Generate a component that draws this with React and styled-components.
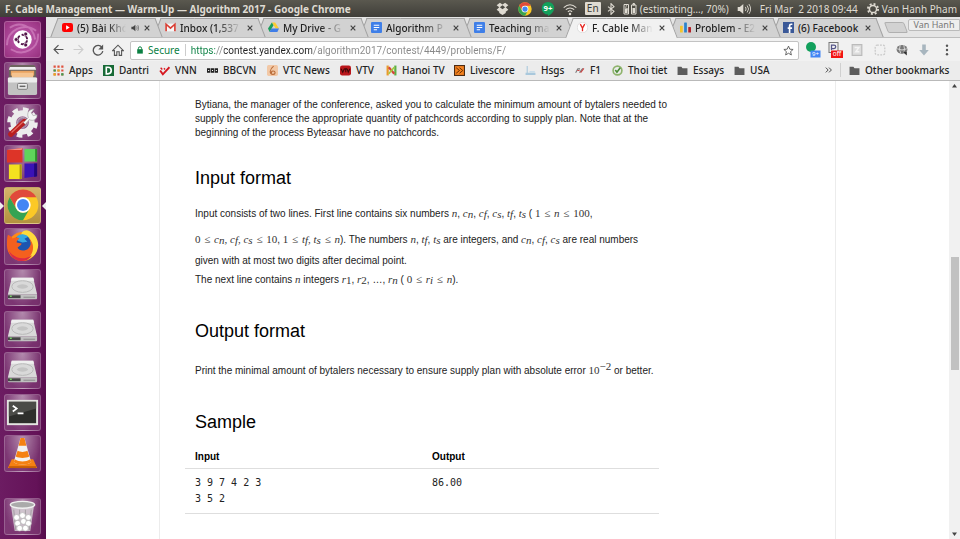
import React from 'react';
import styled, { createGlobalStyle, css } from 'styled-components';

const GlobalStyle = createGlobalStyle`
  *, *::before, *::after { box-sizing: border-box; }
  html, body { margin: 0; padding: 0; background: #fff; }
  body { font-family: "Noto Sans", "Open Sans", sans-serif; font-size: 11px; color: #222; }
  button, input { font: inherit; color: inherit; padding: 0; margin: 0; border: 0; background: none; }
  svg { display: block; flex: none; }
  a { color: inherit; text-decoration: none; }
`;

/* ---------- desktop ---------- */

const Desktop = styled.div`
  min-height: 100vh;
  display: flex;
  flex-direction: column;
`;

const TopPanel = styled.header`
  flex: none;
  height: 17px;
  display: flex;
  align-items: center;
  padding: 0 3px 0 5px;
  background: linear-gradient(#5a584f, #3f3e39);
  color: #dfdbd2;
  font-size: 11px;
  white-space: nowrap;
`;

const WindowTitle = styled.h1`
  flex: 1;
  margin: 0;
  font-family: "Noto Sans", sans-serif;
  font-size: 10px;
  font-weight: 700;
  line-height: 16px;
`;

const Indicators = styled.div`
  display: flex;
  align-items: center;
  line-height: 16px;
`;

const Indicator = styled.button`
  display: flex;
  align-items: center;
  justify-content: ${(p) => (p.$w ? 'center' : 'flex-start')};
  gap: 3px;
  width: ${(p) => (p.$w ? `${p.$w}px` : 'auto')};
  margin-left: ${(p) => p.$gap || 0}px;
  height: 16px;
  font-size: 10px;
  white-space: pre;
`;

const Lang = styled.span`
  padding: 0 2px;
  border-radius: 1px;
  background: #dfdbd2;
  color: #3c3b37;
  line-height: 13px;
`;

const Body = styled.div`
  flex: 1;
  display: flex;
`;

/* ---------- launcher ---------- */

const Launcher = styled.nav`
  flex: none;
  width: 46px;
  padding: 4px 5px 4px 4px;
  display: flex;
  flex-direction: column;
  background: linear-gradient(90deg, #6c1c62, #641258 80%, #560c4b);
`;

const AppList = styled.div`
  flex: 1;
  display: flex;
  flex-direction: column;
  justify-content: space-between;
  margin-bottom: 26px;
`;

const Tile = styled.button`
  position: relative;
  width: 37px;
  height: 37px;
  display: flex;
  align-items: center;
  justify-content: center;
  border-radius: 3px;
  border: 1px solid rgba(255, 255, 255, 0.2);
  background: ${(p) =>
    p.$tone || 'radial-gradient(ellipse at 50% 0, rgba(255,255,255,.5), rgba(255,255,255,.13) 75%)'};
  ${(p) =>
    p.$running &&
    css`
      &::before,
      &::after {
        content: '';
        position: absolute;
        top: 14px;
        border: 4px solid transparent;
      }
      &::before { left: -5px; border-left-color: #eee; border-right-width: 0; }
      &::after { right: -6px; border-right-color: #eee; border-left-width: 0; }
    `}
`;

/* ---------- browser ---------- */

const Browser = styled.div`
  flex: 1;
  min-width: 0;
  display: flex;
  flex-direction: column;
`;

const TabStrip = styled.div`
  flex: none;
  height: 21px;
  display: flex;
  align-items: flex-end;
  padding: 1px 0 0 4px;
  background: #e5e5e5;
  border-bottom: 1px solid #bdbdbd;
`;

const Tab = styled.div`
  position: relative;
  z-index: ${(p) => p.$z};
  flex: 0 1 113px;
  min-width: 0;
  height: 20px;
  margin-right: -10px;
  margin-bottom: -1px;
  padding: 0 12px 1px 12px;
  display: flex;
  align-items: center;
  gap: 4px;
  &::before,
  &::after {
    content: '';
    position: absolute;
    z-index: -1;
    top: 0;
    bottom: ${(p) => (p.$active ? 0 : 1)}px;
    background: ${(p) => (p.$active ? '#f1f1f1' : '#d2d2d2')};
    border: 0 solid #a0a0a0;
    border-top-width: 1px;
  }
  &::before { left: 4px; right: 40%; transform: skewX(-21deg); border-left-width: 1px; }
  &::after { right: 4px; left: 40%; transform: skewX(21deg); border-right-width: 1px; }
`;

const TabTitle = styled.button`
  flex: 1;
  min-width: 0;
  height: 18px;
  overflow: hidden;
  text-align: left;
  white-space: nowrap;
  font-size: 10px;
  font-weight: 500;
  line-height: 18px;
  mask-image: ${(p) => (p.$full ? 'none' : 'linear-gradient(90deg, #000 60%, transparent 98%)')};
`;

const IconButton = styled.button`
  flex: none;
  width: ${(p) => p.$w || 20}px;
  height: ${(p) => p.$h || 18}px;
  display: flex;
  align-items: center;
  justify-content: center;
`;

const NewTab = styled.button`
  flex: none;
  width: 20px;
  height: 11px;
  margin: 0 0 4px 12px;
  border: 1px solid #b0b0b0;
  border-radius: 2px;
  background: #d2d2d2;
  transform: skewX(21deg);
`;

const Profile = styled.button`
  margin: 0 0 6px auto;
  width: 52px;
  height: 12px;
  border: 1px solid #bbb;
  border-radius: 2px 0 0 2px;
  background: #eee;
  color: #777;
  font-size: 9px;
  line-height: 10px;
`;

const Toolbar = styled.div`
  flex: none;
  height: 23px;
  display: flex;
  align-items: center;
  padding: 0 2px;
  background: #f1f1f1;
`;

const Omnibox = styled.label`
  flex: 1;
  min-width: 0;
  height: 19px;
  margin: 1px 2px 0 2px;
  padding-left: 5px;
  display: flex;
  align-items: center;
  border: 1px solid #c3c3c3;
  border-radius: 2px;
  background: #fff;
  font-size: 10px;
`;

const Secure = styled.span`
  margin-left: 4px;
  padding-right: 5px;
  border-right: 1px solid #ccc;
  color: #0b8043;
  line-height: 12px;
`;

const Address = styled.input`
  flex: 1;
  min-width: 0;
  margin-left: 5px;
  outline: 0;
  color: transparent;
  font-family: Roboto, "Noto Sans", sans-serif;
  font-size: 10px;
  background: linear-gradient(90deg, #0b8043 0 25px, #888 25px 33px, #222 33px 121px, #888 121px);
  background-clip: text;
  -webkit-background-clip: text;
`;

const Bookmarks = styled.nav`
  flex: none;
  height: 20px;
  display: flex;
  align-items: center;
  padding: 0 0 1px 7px;
  background: #ececec;
  border-bottom: 1px solid #b9b9b9;
`;

const Bookmark = styled.a`
  flex: none;
  width: ${(p) => p.$w}px;
  display: flex;
  align-items: center;
  gap: 5px;
  white-space: nowrap;
  font-size: 10px;
  font-weight: 500;
  line-height: 18px;
`;

const OtherBookmarks = styled.div`
  margin-left: auto;
  display: flex;
  align-items: center;
`;

const Divider = styled.span`
  width: 1px;
  height: 14px;
  margin: 0 8px 0 2px;
  background: #d0d0d0;
`;

/* ---------- page ---------- */

const Viewport = styled.div`
  flex: 1;
  display: flex;
  background: #fff;
`;

const PageArea = styled.main`
  flex: 1;
  min-width: 0;
  display: flex;
  justify-content: center;
`;

const Problem = styled.article`
  width: 100%;
  max-width: 677px;
  padding: 17px 176px 0 25px;
  border: solid #ececec;
  border-width: 0 1px;
  font-family: "Liberation Sans", Arial, sans-serif;
  font-size: 10px;
  color: #222;
`;

const Text = styled.p`
  margin: 0;
  padding-left: 10px;
  white-space: nowrap;
  line-height: ${(p) => p.$lh || 14}px;
`;

const Line = styled.span`
  display: block;
  height: ${(p) => (p.$tall ? 26 : 18)}px;
  line-height: ${(p) => (p.$tall ? 26 : 18)}px;
`;

const Heading = styled.h2`
  margin: ${(p) => p.$top}px 0 ${(p) => p.$bottom}px;
  padding-left: 10px;
  font-size: 18px;
  font-weight: 400;
  line-height: 22px;
  color: #000;
`;

const Math = styled.span`
  font-family: "Liberation Serif", "Times New Roman", serif;
  font-size: 11px;
  font-style: ${(p) => (p.$it ? 'italic' : 'normal')};
  color: #333;
  sub, sup { font-size: 11px; line-height: 0; }
  sub { vertical-align: -1px; }
  sup { vertical-align: 4px; }
`;

const Rel = styled.span`
  margin: 0 1px;
`;

const Samples = styled.table`
  width: 100%;
  border-collapse: collapse;
  table-layout: fixed;
  th, td { width: 50%; text-align: left; vertical-align: top; border-bottom: 1px solid #dedede; }
  th { padding: 0 10px 3px; line-height: 16px; color: #000; }
  td {
    padding: 6px 10px;
    font-family: "DejaVu Sans Mono", monospace;
    line-height: 16px;
    white-space: pre;
  }
`;

const Scrollbar = styled.div`
  flex: none;
  width: 11px;
  display: flex;
  flex-direction: column;
  align-items: center;
  padding: 3px 0;
  background: #f1f1f1;
`;

const Track = styled.div`
  flex: ${(p) => p.$grow} 1 0;
`;

const Thumb = styled.div`
  flex: 114 1 0;
  width: 8px;
  background: #c1c1c1;
`;

/* ---------- icons ---------- */

const Svg = ({ s = 10, w, h, vb = '0 0 20 20', children, ...rest }) => (
  <svg width={w || s} height={h || s} viewBox={vb} fill="none" aria-hidden="true" {...rest}>
    {children}
  </svg>
);

const Chrome = ({ s }) => (
  <Svg s={s} vb="0 0 48 48">
    <circle cx="24" cy="24" r="23" fill="#fbc926" />
    <path d="M4 12.5A23 23 0 0 1 44 12.5H24A11.5 11.5 0 0 0 14 29.8z" fill="#e04a3b" />
    <path d="M4 12.5A23 23 0 0 0 24 47L34 29.8A11.5 11.5 0 0 1 14 29.8z" fill="#35a353" />
    <circle cx="24" cy="24" r="11.5" fill="#fff" />
    <circle cx="24" cy="24" r="9" fill="#4285f4" />
  </Svg>
);

const Ubuntu = () => (
  <Svg s={35} vb="0 0 36 36">
    <path d="M2 24C2 8 20 0 32 9M34 12c1 16-15 24-28 16M5 6C14-1 29 3 31 18" stroke="#e6a3d7" strokeOpacity=".45" strokeWidth="2" />
    <circle cx="18" cy="18" r="9.5" fill="#fff" />
    <circle cx="18" cy="18" r="4.8" stroke="#54164a" strokeWidth="2" strokeDasharray="8 2.05" strokeDashoffset="-1" />
    <g fill="#54164a" stroke="#fff" strokeWidth=".7">
      <circle cx="11.5" cy="18" r="2" /><circle cx="21.3" cy="12.4" r="2" /><circle cx="21.3" cy="23.6" r="2" />
    </g>
  </Svg>
);

const Files = () => (
  <Svg s={35} vb="0 0 36 36">
    <path d="M4 5l2-3h24l2 3v11H4z" fill="#6d655f" />
    <path d="M5 4h26l1 3H4z" fill="#eee" />
    <path d="M6 8h24v5H6z" fill="#e9a361" /><path d="M7 10h22v6H7z" fill="#f5c38f" />
    <rect x="3" y="15" width="30" height="18" rx="2" fill="#c2c2c2" />
    <rect x="3" y="15" width="30" height="5" rx="1" fill="#ececec" />
    <rect x="13" y="21" width="10" height="6" rx="1" fill="#eee" stroke="#777" />
    <path d="M15 24h6" stroke="#666" strokeWidth="1.6" />
  </Svg>
);

const Settings = () => (
  <Svg s={35} vb="0 0 36 36">
    <circle cx="18" cy="18" r="13.500" stroke="#eee" strokeWidth="4.500" strokeDasharray="5.600 5" />
    <circle cx="18" cy="18" r="9.500" stroke="#ececec" strokeWidth="6" />
    <circle cx="18" cy="18" r="5" stroke="#bbb" strokeWidth="1" />
    <path d="M6 30L20 17" stroke="#b91f1f" strokeWidth="5.5" strokeLinecap="round" />
    <path d="M7 28L19 17" stroke="#e46b60" strokeWidth="1.2" strokeLinecap="round" />
    <path d="M19 18l5-5c-2-5 1-9 6-9l-3 4 2 3 4-1c0 5-4 7-8 5l-4 5z" fill="#f4f4f4" stroke="#999" strokeWidth=".6" />
  </Svg>
);

const Blocks = () => (
  <Svg s={35} vb="0 0 36 36">
    <path d="M2 4l16-2v15H2z" fill="#dd3428" /><path d="M2 4l16-2-1 2H2z" fill="#f59084" />
    <path d="M20 3h13v13H20z" fill="#5fd45b" /><path d="M31 3h2v13h-2z" fill="#2c8c2a" />
    <path d="M4 19h13v15H4z" fill="#f3e11f" /><path d="M15 19h2v15h-2z" fill="#a8960a" />
    <path d="M20 18h13v13l-13 2z" fill="#3a12b6" /><path d="M30 18h3v13l-3 1z" fill="#21077a" />
  </Svg>
);

const Firefox = () => (
  <Svg s={35} vb="0 0 36 36">
    <circle cx="18" cy="18" r="15" fill="#ff8a16" />
    <path d="M17 4c3-3 5-3 8-2 8 4 11 13 8 20-2 6-7 9-12 10 6-6 5-18-4-22z" fill="#ffda3c" />
    <circle cx="18" cy="15" r="9" fill="#1c55b0" />
    <path d="M12 8c4-4 9-3 12 0l-4 2 3 3-5 1-5-2z" fill="#36a9e2" />
    <path d="M3 6c2 1 4 2 5 4 3-2 6-1 7 0-2 1-3 2-3 4l5 1c0 2-3 3-4 4 1 4 8 4 11 1 3-3 3-6 1-10 6 5 5 17-3 21C12 35 2 28 2 17c0-4 0-8 1-11z" fill="#f4601e" />
    <path d="M4 22c5 8 15 11 24 5-7 10-21 7-24-5z" fill="#dc2a45" />
  </Svg>
);

const Drive = () => (
  <Svg s={35} vb="0 0 36 36">
    <path d="M7 8h22l4 17H3z" fill="#d9d9d9" />
    <path d="M7 8h22l1 3H6z" fill="#efefef" />
    <ellipse cx="18" cy="17" rx="11" ry="6" stroke="#b7b7b7" />
    <path d="M12 17c3-3 9-3 12 0-3 3-9 3-12 0z" fill="#c4c4c4" />
    <path d="M3 25h30v4q0 1-1 1H4q-1 0-1-1z" fill="#c0c0c0" />
    <path d="M3 26h13v3H3z" fill="#454545" /><path d="M5 27h2" stroke="#7c6" strokeWidth="1.5" />
    <path d="M19 28h12" stroke="#888" />
  </Svg>
);

const Terminal = () => (
  <Svg s={35} vb="0 0 36 36">
    <rect x="2" y="5" width="32" height="26" fill="#e5e5e2" />
    <rect x="4" y="7" width="28" height="22" fill="#2e2f2c" />
    <path d="M4 7h28v7L4 22z" fill="#4b4c48" />
    <path d="M8 11l4 3-4 3M13 19h6" stroke="#fff" strokeWidth="1.8" />
  </Svg>
);

const Vlc = () => (
  <Svg s={35} vb="0 0 36 36">
    <path d="M7 24h22l4 9H3z" fill="#f58112" /><path d="M4 31h28v2H4z" fill="#c65f06" />
    <path d="M16 2h4l7 25c-4 3-14 3-18 0z" fill="#f2f2f2" />
    <path d="M16 2h4l2 8h-8zM13 15c3 2 7 2 10 0l2 6c-4 2-10 2-14 0z" fill="#f58112" />
    <path d="M9 27l1-3c5 3 11 3 16 0l1 3c-4 3-14 3-18 0z" fill="#f58112" />
  </Svg>
);

const Trash = () => (
  <Svg s={35} vb="0 0 36 36">
    <path d="M6 6h24l-4 27H10z" fill="#dfe0df" fillOpacity=".75" />
    <ellipse cx="18" cy="6" rx="12.5" ry="3.5" fill="#aaa" stroke="#f0f0f0" strokeWidth="1.4" />
    <path d="M9 11l2 21M27 11l-2 21M15 11v5M21 11v5" stroke="#888" strokeOpacity=".6" />
    <g fill="#fff" stroke="#aaa" strokeWidth=".6">
      <circle cx="12" cy="19" r="3" /><circle cx="18" cy="17" r="3" /><circle cx="24" cy="19" r="3" />
      <circle cx="13" cy="25" r="3" /><circle cx="19" cy="23" r="3" /><circle cx="24" cy="25" r="3" />
      <circle cx="15" cy="30" r="3" /><circle cx="21" cy="30" r="3" />
    </g>
  </Svg>
);

const Close = () => (
  <Svg s={6} vb="0 0 6 6"><path d="M.7.7l4.6 4.6M5.3.7L.7 5.3" stroke="#444" strokeWidth="1.2" /></Svg>
);
const Audio = () => (
  <Svg s={8}><path d="M1 7h4l6-5v16l-6-5H1z" fill="#444" /><path d="M14 6q3 4 0 8M17 3q5 7 0 14" stroke="#444" strokeWidth="1.5" /></Svg>
);
const Youtube = () => (
  <Svg s={11}><rect y="2" width="20" height="16" rx="4" fill="#f00" /><path d="M7.5 6l6.5 4-6.5 4z" fill="#fff" /></Svg>
);
const Gmail = () => (
  <Svg s={11}><rect x="1" y="3" width="18" height="14" fill="#f6f6f6" /><path d="M2 17V4l8 7 8-7v13" stroke="#d93f34" strokeWidth="3" /></Svg>
);
const GDrive = () => (
  <Svg s={11}><path d="M7 1h6l7 11h-6z" fill="#fbcb32" /><path d="M7 1l3 5-7 12-3-6z" fill="#1b9e5a" /><path d="M6 12h14l-3 6H3z" fill="#3f7de8" /></Svg>
);
const Docs = () => (
  <Svg s={11}><rect width="20" height="20" rx="2" fill="#3f7fe8" /><path d="M5 6h10M5 10h10M5 14h6" stroke="#fff" strokeWidth="2" /></Svg>
);
const Yandex = () => (
  <Svg s={11}><circle cx="10" cy="10" r="9.5" fill="#fff" stroke="#ccc" /><path d="M6 4l4 7 4-7M10 10v7" stroke="#e52620" strokeWidth="2.4" /></Svg>
);
const Codeforces = () => (
  <Svg s={11}><rect x="0" y="7" width="5" height="12" rx="1" fill="#f3c52b" /><rect x="7.5" y="1" width="5" height="18" rx="1" fill="#2b83cc" /><rect x="15" y="9" width="5" height="10" rx="1" fill="#b32229" /></Svg>
);
const Facebook = () => (
  <Svg s={11}><rect width="20" height="20" fill="#3b5998" /><path d="M17 4h-2q-3 0-3 3v13M8.5 11h8" stroke="#fff" strokeWidth="3" /></Svg>
);
const Folder = () => (
  <Svg s={11}><path d="M1 3h7l2 3h9v12H1z" fill="#5c5c5c" /></Svg>
);

const tabs = [
  { title: '(5) Bài Khó', icon: <Youtube />, audio: true },
  { title: 'Inbox (1,537', icon: <Gmail /> },
  { title: 'My Drive - G', icon: <GDrive /> },
  { title: 'Algorithm P', icon: <Docs /> },
  { title: 'Teaching ma', icon: <Docs /> },
  { title: 'F. Cable Man', icon: <Yandex />, active: true },
  { title: 'Problem - E2', icon: <Codeforces /> },
  { title: '(6) Facebook', icon: <Facebook />, full: true },
];

const bookmarks = [
  ['Apps', 50, <Svg key="i" s={11}><path d="M3 1v18M10 1v18M17 1v18" stroke="#e0503c" strokeWidth="4" strokeDasharray="4 3" /><path d="M3 8v4M17 15v4" stroke="#35a353" strokeWidth="4" /><path d="M10 8v4M3 15v4" stroke="#e6ac20" strokeWidth="4" /></Svg>],
  ['Dantri', 56, <Svg key="i" s={11}><rect width="20" height="20" fill="#176a36" /><path d="M6 4h3q6 0 6 6t-6 6H6z" stroke="#fff" strokeWidth="3" /></Svg>],
  ['VNN', 48, <Svg key="i" s={11}><path d="M2 10l5 7L19 4" stroke="#d61820" strokeWidth="3.5" /><path d="M3 5l3 3M9 6l2 2" stroke="#d61820" strokeWidth="2.5" /></Svg>],
  ['BBCVN', 60, <Svg key="i" s={11}><path d="M0 6h6v8H0zM7 6h6v8H7zM14 6h6v8h-6z" fill="#222" /><path d="M2 10h2M9 10h2M16 10h2" stroke="#fff" strokeWidth="2" /></Svg>],
  ['VTC News', 73, <Svg key="i" s={11}><rect width="20" height="20" rx="3" fill="#f2c8a6" /><path d="M12 2c-8 6-8 15-1 15 5 0 5-6 0-6-3 0-4 3-2 4" stroke="#b96b38" strokeWidth="2" /></Svg>],
  ['VTV', 46, <Svg key="i" s={11}><rect y="1" width="20" height="18" rx="4" fill="#b9161b" /><path d="M2 7l3 6 3-6M8 7h5M10.500 7v6M13 7l2 6 3-6" stroke="#3b0909" strokeWidth="2" /></Svg>],
  ['Hanoi TV', 68, <Svg key="i" s={11}><path d="M3 1v18" stroke="#e99a2b" strokeWidth="4" /><path d="M17 1v18" stroke="#5cb046" strokeWidth="4" /><path d="M5 4l10 12" stroke="#d6453a" strokeWidth="4" /><path d="M15 4L5 16" stroke="#a6c93b" strokeWidth="3" /></Svg>],
  ['Livescore', 71, <Svg key="i" s={11}><rect x="1" y="1" width="18" height="18" fill="#f58220" stroke="#4b2b14" strokeWidth="2" /><path d="M4 5l6 5-6 5M10 5l6 5-6 5" stroke="#663000" strokeWidth="1.800" /></Svg>],
  ['Hsgs', 49, <Svg key="i" s={11}><path d="M1 14h18v4H1zM3 2h2v12H3z" fill="#a9c8dc" /><path d="M8 11h10v3H8z" fill="#c9dde9" /></Svg>],
  ['F1', 38, <Svg key="i" s={11}><path d="M3 14L7 7h4M10 14l6-8" stroke="#777" strokeWidth="2" /><path d="M12 14l6-8M6 10h4" stroke="#c44" strokeWidth="2" /></Svg>],
  ['Thoi tiet', 65, <Svg key="i" s={11}><circle cx="10" cy="10" r="8" stroke="#8fb46d" strokeWidth="3" /><path d="M6 9l3 4 6-8" stroke="#4c8c37" strokeWidth="3" /></Svg>],
  ['Essays', 57, <Folder key="i" />],
  ['USA', 40, <Folder key="i" />],
];

const V = ({ b, s }) => (
  <Math $it>{b}{s && <sub>{s}</sub>}</Math>
);
const N = ({ children }) => <Math>{children}</Math>;
const Le = () => <Math><Rel>≤</Rel></Math>;

const tileTones = {
  ubuntu: 'radial-gradient(#c45fb2, #97317f)',
  chrome: 'linear-gradient(#d5b46a, #b2913f)',
};

export default function App() {
  return (
    <Desktop>
      <GlobalStyle />
      <TopPanel>
        <WindowTitle>F. Cable Management — Warm-Up — Algorithm 2017 - Google Chrome</WindowTitle>
        <Indicators>
          <Indicator $w={23} aria-label="Dropbox"><Svg s={13}><path d="M6 1l4 3 4-3 5 4-4 3 4 4-4 3v2l-5 3-5-3v-2l-4-3 4-4-4-3z" fill="#dfdbd2" /><path d="M10 5l4 3-4 3-4-3z" fill="#4b4a44" /></Svg></Indicator>
          <Indicator $w={23} aria-label="Chrome"><Chrome s={14} /></Indicator>
          <Indicator $w={22} aria-label="Hangouts">
            <Svg s={14}><path d="M10 0a9 9 0 1 0 0 18v2q8-4 9-11a9 9 0 0 0-9-9z" fill="#12a05c" /><text x="10" y="13" textAnchor="middle" fontSize="11" fontWeight="700" fontFamily="Noto Sans" fill="#fff">9+</text></Svg>
          </Indicator>
          <Indicator $w={23} aria-label="Wi-Fi"><Svg s={14}><path d="M1 8q9-8 18 0M4 11q6-5 12 0M7 14q3-3 6 0" stroke="#dfdbd2" strokeWidth="1.500" /><circle cx="10" cy="17" r="1.800" fill="#dfdbd2" /></Svg></Indicator>
          <Indicator $w={22}><Lang>En</Lang></Indicator>
          <Indicator $w={15} aria-label="Bluetooth"><Svg s={12}><path d="M5 6l10 8-5 5V1l5 5-10 8" stroke="#dfdbd2" strokeWidth="1.800" /></Svg></Indicator>
          <Indicator $gap={4}>
            <Svg w={14} h={12} vb="0 0 28 24"><path d="M2 3h9v19H2zM17 4h9v18h-9zM20 1h3v3h-3z" stroke="#dfdbd2" strokeWidth="2" /><path d="M4 12h5v8H4zM19 10h5v10h-5z" fill="#dfdbd2" /><path d="M7 4l-2 7h4l-3 8" stroke="#dfdbd2" strokeWidth="1.500" /></Svg>
            (estimating…, 70%)
          </Indicator>
          <Indicator $gap={8} aria-label="Volume"><Svg s={14}><path d="M1 7h3l5-4v14l-5-4H1z" fill="#dfdbd2" /><path d="M12 7q2 3 0 6M14.500 5q4 5 0 10M17 3q5 7 0 14" stroke="#dfdbd2" strokeWidth="1.300" /></Svg></Indicator>
          <Indicator $gap={9}>{'Fri Mar  2 2018 09:44'}</Indicator>
          <Indicator $gap={9}>
            <Svg s={12}><circle cx="10" cy="10" r="6" stroke="#dfdbd2" strokeWidth="2.500" /><circle cx="10" cy="10" r="8.500" stroke="#dfdbd2" strokeWidth="3" strokeDasharray="3.300 3.370" /></Svg>
            Van Hanh Pham
          </Indicator>
        </Indicators>
      </TopPanel>

      <Body>
        <Launcher aria-label="Launcher">
          <AppList>
            <Tile $tone={tileTones.ubuntu} aria-label="Search"><Ubuntu /></Tile>
            <Tile aria-label="Files"><Files /></Tile>
            <Tile aria-label="System Settings"><Settings /></Tile>
            <Tile aria-label="Blocks"><Blocks /></Tile>
            <Tile $tone={tileTones.chrome} $running aria-label="Google Chrome"><Chrome s={32} /></Tile>
            <Tile aria-label="Firefox"><Firefox /></Tile>
            <Tile aria-label="Disk 1"><Drive /></Tile>
            <Tile aria-label="Disk 2"><Drive /></Tile>
            <Tile aria-label="Disk 3"><Drive /></Tile>
            <Tile aria-label="Terminal"><Terminal /></Tile>
            <Tile aria-label="VLC"><Vlc /></Tile>
          </AppList>
          <Tile aria-label="Trash"><Trash /></Tile>
        </Launcher>

        <Browser>
          <TabStrip>
            {tabs.map((t, i) => (
              <Tab key={t.title} $active={t.active} $z={t.active ? 20 : 10 - i}>
                {t.icon}
                <TabTitle $full={t.full}>{t.title}</TabTitle>
                {t.audio && <Audio />}
                <IconButton $w={8} aria-label={`Close ${t.title}`}><Close /></IconButton>
              </Tab>
            ))}
            <NewTab aria-label="New tab" />
            <Profile>Van Hanh</Profile>
          </TabStrip>

          <Toolbar>
            <IconButton aria-label="Back"><Svg s={11}><path d="M19 10H3M10 2l-8 8 8 8" stroke="#555" strokeWidth="2.200" /></Svg></IconButton>
            <IconButton aria-label="Forward"><Svg s={11}><path d="M1 10h16M10 2l8 8-8 8" stroke="#ccc" strokeWidth="2.200" /></Svg></IconButton>
            <IconButton aria-label="Reload"><Svg s={12}><path d="M16.500 5.500A8 8 0 1 0 18 12" stroke="#555" strokeWidth="2.200" /><path d="M18.500 1v8h-8z" fill="#555" /></Svg></IconButton>
            <IconButton aria-label="Home"><Svg s={12}><path d="M1 11l9-9 9 9h-3v8h-4v-6H8v6H4v-8z" stroke="#555" strokeWidth="1.800" /></Svg></IconButton>
            <Omnibox>
              <Svg s={8}><rect x="3" y="8" width="14" height="11" fill="#0b8043" /><path d="M6 9V6q0-4 4-4t4 4v3" stroke="#0b8043" strokeWidth="2.500" /></Svg>
              <Secure>Secure</Secure>
              <Address aria-label="Address" defaultValue="https://contest.yandex.com/algorithm2017/contest/4449/problems/F/" />
              <IconButton aria-label="Bookmark this page"><Svg s={11}><path d="M10 2l2.400 5.600 6 .5-4.600 4 1.400 6L10 15l-5.200 3.100 1.400-6-4.600-4 6-.5z" stroke="#555" strokeWidth="1.600" /></Svg></IconButton>
            </Omnibox>
            <IconButton $w={23} aria-label="Hangouts">
              <Svg w={16} h={16} vb="0 0 32 32"><circle cx="12" cy="10" r="10" fill="#12a05c" /><rect x="11" y="17" width="20" height="14" fill="#4285f4" /><text x="21" y="28" textAnchor="middle" fontSize="12" fontFamily="Noto Sans" fill="#fff">9+</text></Svg>
            </IconButton>
            <IconButton $w={22} aria-label="Extension off">
              <Svg w={16} h={16} vb="0 0 32 32"><rect x="4" y="1" width="18" height="20" stroke="#777" strokeWidth="2" /><path d="M9 16V6h5a3 3 0 0 1 0 7H9" stroke="#558" strokeWidth="2.500" /><rect x="8" y="17" width="24" height="15" fill="#f21313" /><text x="20" y="28" textAnchor="middle" fontSize="13" fontFamily="Noto Sans" fill="#fff">off</text></Svg>
            </IconButton>
            <IconButton $w={22} aria-label="Page extension"><Svg s={12}><rect x="2" y="1" width="16" height="18" fill="#ddd" stroke="#bbb" strokeWidth="2" /><path d="M6 6h7l-5 7h6" stroke="#f4f4f4" strokeWidth="2.500" /></Svg></IconButton>
            <IconButton $w={23} aria-label="Selection extension"><Svg s={12}><rect x="2" y="2" width="16" height="16" rx="3" stroke="#c9c9c9" strokeWidth="2" strokeDasharray="3 2" /></Svg></IconButton>
            <IconButton $w={22} aria-label="Globe extension"><Svg s={12}><ellipse cx="10" cy="9" rx="9" ry="7.500" fill="#777" /><path d="M2 8q8 4 16 0M7 2q-3 7 1 14M13 2q3 7-1 14" stroke="#ddd" strokeWidth="1.500" /><path d="M11 13h7v6z" fill="#333" /></Svg></IconButton>
            <IconButton $w={22} aria-label="Download"><Svg s={12}><path d="M7 1h6v9h5l-8 9-8-9h5z" fill="#a8b6bf" /></Svg></IconButton>
            <IconButton $w={23} aria-label="Menu"><Svg s={12}><g fill="#555"><circle cx="10" cy="3" r="2" /><circle cx="10" cy="10" r="2" /><circle cx="10" cy="17" r="2" /></g></Svg></IconButton>
          </Toolbar>

          <Bookmarks aria-label="Bookmarks">
            {bookmarks.map(([name, w, icon]) => (
              <Bookmark key={name} href="#" $w={w}>{icon}{name}</Bookmark>
            ))}
            <OtherBookmarks>
              <IconButton $w={18} aria-label="More bookmarks"><Svg s={8}><path d="M2 4l6 6-6 6M10 4l6 6-6 6" stroke="#444" strokeWidth="2.400" /></Svg></IconButton>
              <Divider />
              <Bookmark href="#" $w={111}><Folder />Other bookmarks</Bookmark>
            </OtherBookmarks>
          </Bookmarks>

          <Viewport>
            <PageArea>
              <Problem>
                <Text>
                  Bytiana, the manager of the conference, asked you to calculate the minimum amount of bytalers needed to<br />
                  supply the conference the appropriate quantity of patchcords according to supply plan. Note that at the<br />
                  beginning of the process Byteasar have no patchcords.
                </Text>
                <Heading $top={27} $bottom={11}>Input format</Heading>
                <Text>
                  <Line $tall>
                    Input consists of two lines. First line contains six numbers <V b="n" />, <V b="c" s="n" />, <V b="c" s="f" />, <V b="c" s="s" />, <V b="t" s="f" />, <V b="t" s="s" /> ( <N>1</N> <Le /> <V b="n" /> <Le /> <N>100</N>,
                  </Line>
                  <Line $tall>
                    <N>0</N> <Le /> <V b="c" s="n" /><N>, </N><V b="c" s="f" /><N>, </N><V b="c" s="s" /> <Le /> <N>10</N>, <N>1</N> <Le /> <V b="t" s="f" /><N>, </N><V b="t" s="s" /> <Le /> <V b="n" />). The numbers <V b="n" />, <V b="t" s="f" />, <V b="t" s="s" /> are integers, and <V b="c" s="n" />, <V b="c" s="f" />, <V b="c" s="s" /> are real numbers
                  </Line>
                  <Line>given with at most two digits after decimal point.</Line>
                  <Line>
                    The next line contains <V b="n" /> integers <V b="r" s={<N>1</N>} />, <V b="r" s={<N>2</N>} />, …, <V b="r" s="n" /> ( <N>0</N> <Le /> <V b="r" s="i" /> <Le /> <V b="n" />).
                  </Line>
                </Text>
                <Heading $top={32} $bottom={18}>Output format</Heading>
                <Text $lh={20}>
                  Print the minimal amount of bytalers necessary to ensure supply plan with absolute error <Math>10<sup>−2</sup></Math> or better.
                </Text>
                <Heading $top={30} $bottom={16}>Sample</Heading>
                <Samples>
                  <thead><tr><th scope="col">Input</th><th scope="col">Output</th></tr></thead>
                  <tbody><tr><td>{'3 9 7 4 2 3\n3 5 2'}</td><td>86.00</td></tr></tbody>
                </Samples>
              </Problem>
            </PageArea>
            <Scrollbar aria-hidden="true">
              <Svg w={5} h={4} vb="0 0 5 4"><path d="M0 3.500L2.500 0 5 3.500z" fill="#444" /></Svg>
              <Track $grow={169} />
              <Thumb />
              <Track $grow={162} />
              <Svg w={5} h={4} vb="0 0 5 4"><path d="M0 .5L2.500 4 5 .5z" fill="#444" /></Svg>
            </Scrollbar>
          </Viewport>
        </Browser>
      </Body>
    </Desktop>
  );
}
